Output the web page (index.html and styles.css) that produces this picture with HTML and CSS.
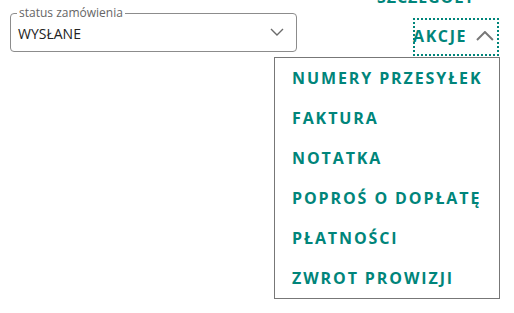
FILE: index.html
```html
<!DOCTYPE html>
<html lang="pl">
  <head>
    <meta charset="UTF-8" />
    <meta name="viewport" content="width=device-width, initial-scale=1.0" />
    <title>Zamówienie</title>
    <link rel="stylesheet" href="styles.css">
  </head>
  <body>
    <div class="toolbar">
      <fieldset class="status">
        <legend>status zamówienia</legend>
        <div class="status-row">
          <span class="status-value">WYSŁANE</span>
          <svg class="chevron-down" width="14" height="8" viewBox="0 0 14 8">
            <path d="M1 1 L7 7 L13 1" fill="none" stroke="#6b6b6b" stroke-width="1.4" />
          </svg>
        </div>
      </fieldset>

      <div class="actions">
        <a class="details" href="#">SZCZEGÓŁY</a>
        <button class="akcje">
          <span class="akcje-label">AKCJE</span>
          <svg width="18" height="10" viewBox="0 0 18 10">
            <path d="M1 9 L9 1 L17 9" fill="none" stroke="#777" stroke-width="2" />
          </svg>
        </button>
        <ul class="menu">
          <li>NUMERY PRZESYŁEK</li>
          <li>FAKTURA</li>
          <li>NOTATKA</li>
          <li>POPROŚ O DOPŁATĘ</li>
          <li>PŁATNOŚCI</li>
          <li>ZWROT PROWIZJI</li>
        </ul>
      </div>
    </div>
  </body>
</html>
```

FILE: styles.css
```css
body {
  margin: 0;
  background: white;
  font-family: "Open Sans", Arial, sans-serif;
}

.toolbar {
  display: flex;
  align-items: flex-start;
  padding: 0 15px 0 10px;
}

.status {
  flex-shrink: 0;
  width: 287px;
  box-sizing: border-box;
  margin: 5px 0 0 0;
  padding: 0 12px 0 6px;
  border: 1px solid #8c8c8c;
  border-radius: 4px;
}

.status legend {
  padding: 0 2px;
  font-size: 12px;
  line-height: 16px;
  color: #666;
}

.status-row {
  display: flex;
  align-items: center;
  justify-content: space-between;
  height: 25px;
  padding: 0 0 5px 1px;
}

.status-value {
  font-size: 14px;
  color: #222;
}

.chevron-down {
  margin-bottom: 3px;
}

/* menu is wider than this column and spills to the left, over the select */
.actions {
  flex: 1;
  min-width: 0;
  display: flex;
  flex-direction: column;
  align-items: flex-end;
}

.details {
  margin-top: -14px;
  margin-right: 24px;
  line-height: 22px;
  font-size: 16px;
  font-weight: 700;
  letter-spacing: 0.9px;
  color: #00857a;
  text-decoration: none;
}

.akcje {
  display: flex;
  align-items: center;
  gap: 9px;
  width: 86px;
  height: 38px;
  margin-top: 10px;
  padding: 0 3px 2px 0;
  border: 2px dotted #00857a;
  background: none;
  font-family: inherit;
  font-size: 16px;
  font-weight: 700;
  letter-spacing: 1.6px;
  color: #00857a;
  cursor: pointer;
}

.akcje-label {
  margin-left: -2px;
}

.menu {
  flex-shrink: 0;
  width: 226px;
  box-sizing: border-box;
  margin: 1px -1px 0 0;
  padding: 0;
  list-style: none;
  border: 1px solid #777;
  background: white;
}

.menu li {
  padding-left: 17px;
  line-height: 40px;
  font-size: 16px;
  font-weight: 700;
  letter-spacing: 1.9px;
  color: #00857a;
  white-space: nowrap;
}
```
